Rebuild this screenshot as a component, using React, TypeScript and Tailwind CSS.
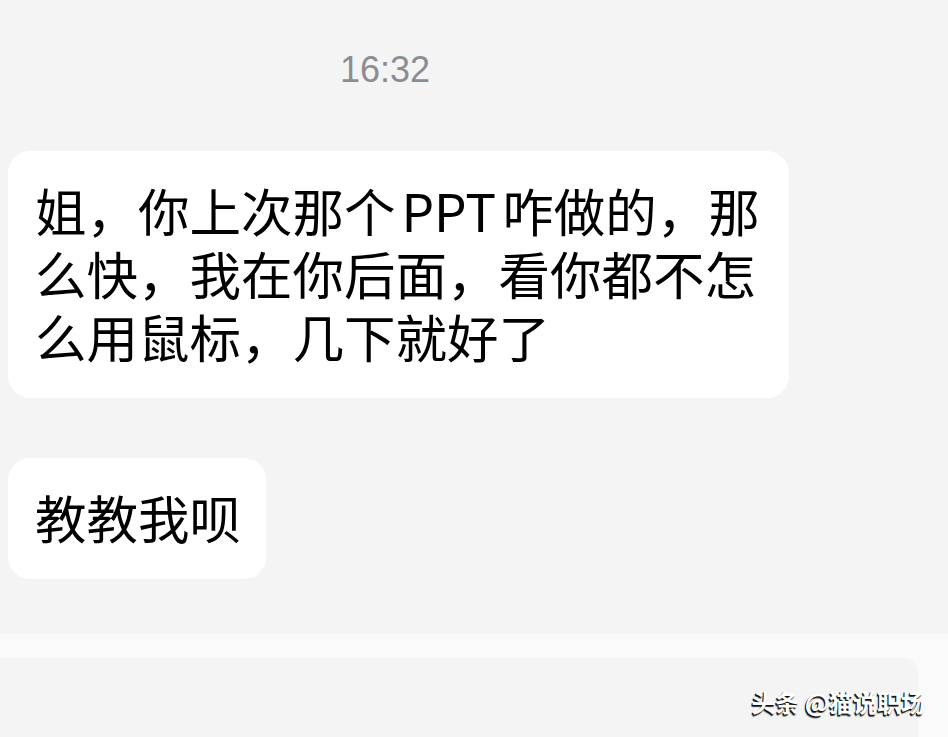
const cjk = "font-['PingFang_SC','Noto_Sans_CJK_SC',sans-serif]";

function Bubble({ children, width }: { children: React.ReactNode; width: string }) {
  return (
    <div
      className={`${width} rounded-[22px] bg-white pl-[27px] pr-[27px] pt-[27px] pb-[31px] text-[51.5px] leading-[63px] text-black ${cjk}`}
    >
      {children}
    </div>
  );
}

export default function App() {
  return (
    <div className="relative flex h-[737px] w-[948px] flex-col overflow-hidden bg-[#f4f4f4]">
      {/* timestamp */}
      <div className="mt-[48px] w-[770px] text-center font-['Liberation_Sans',sans-serif] text-[36px] leading-[44px] text-[#8b8d94]">
        16:32
      </div>

      <div className="mt-[59px] flex flex-col items-start gap-[60px] pl-[8px]">
        <Bubble width="w-[781px]">
          <div className="whitespace-nowrap">
            姐，你上次那个<span className="mx-[6px]">PPT</span>咋做的，那
          </div>
          <div className="whitespace-nowrap">么快，我在你后面，看你都不怎</div>
          <div className="whitespace-nowrap">么用鼠标，几下就好了</div>
        </Bubble>
        <Bubble width="w-[258px]">
          <div className="whitespace-nowrap">教教我呗</div>
        </Bubble>
      </div>

      {/* input bar */}
      <div className="mt-auto flex h-[103px] flex-col bg-[#fafafb]">
        <div className="h-[24px]" />
        <div className="flex flex-1">
          <div className="w-[918px] rounded-tr-[14px] bg-[#f4f4f4]" />
        </div>
      </div>

      {/* watermark */}
      <div
        className={`absolute right-[23px] top-[686px] text-[24px] leading-[32px] font-bold text-white [text-shadow:-1px_1px_0_#111,-1px_2px_1px_#333] ${cjk}`}
      >
        头条 @猫说职场
      </div>
    </div>
  );
}
